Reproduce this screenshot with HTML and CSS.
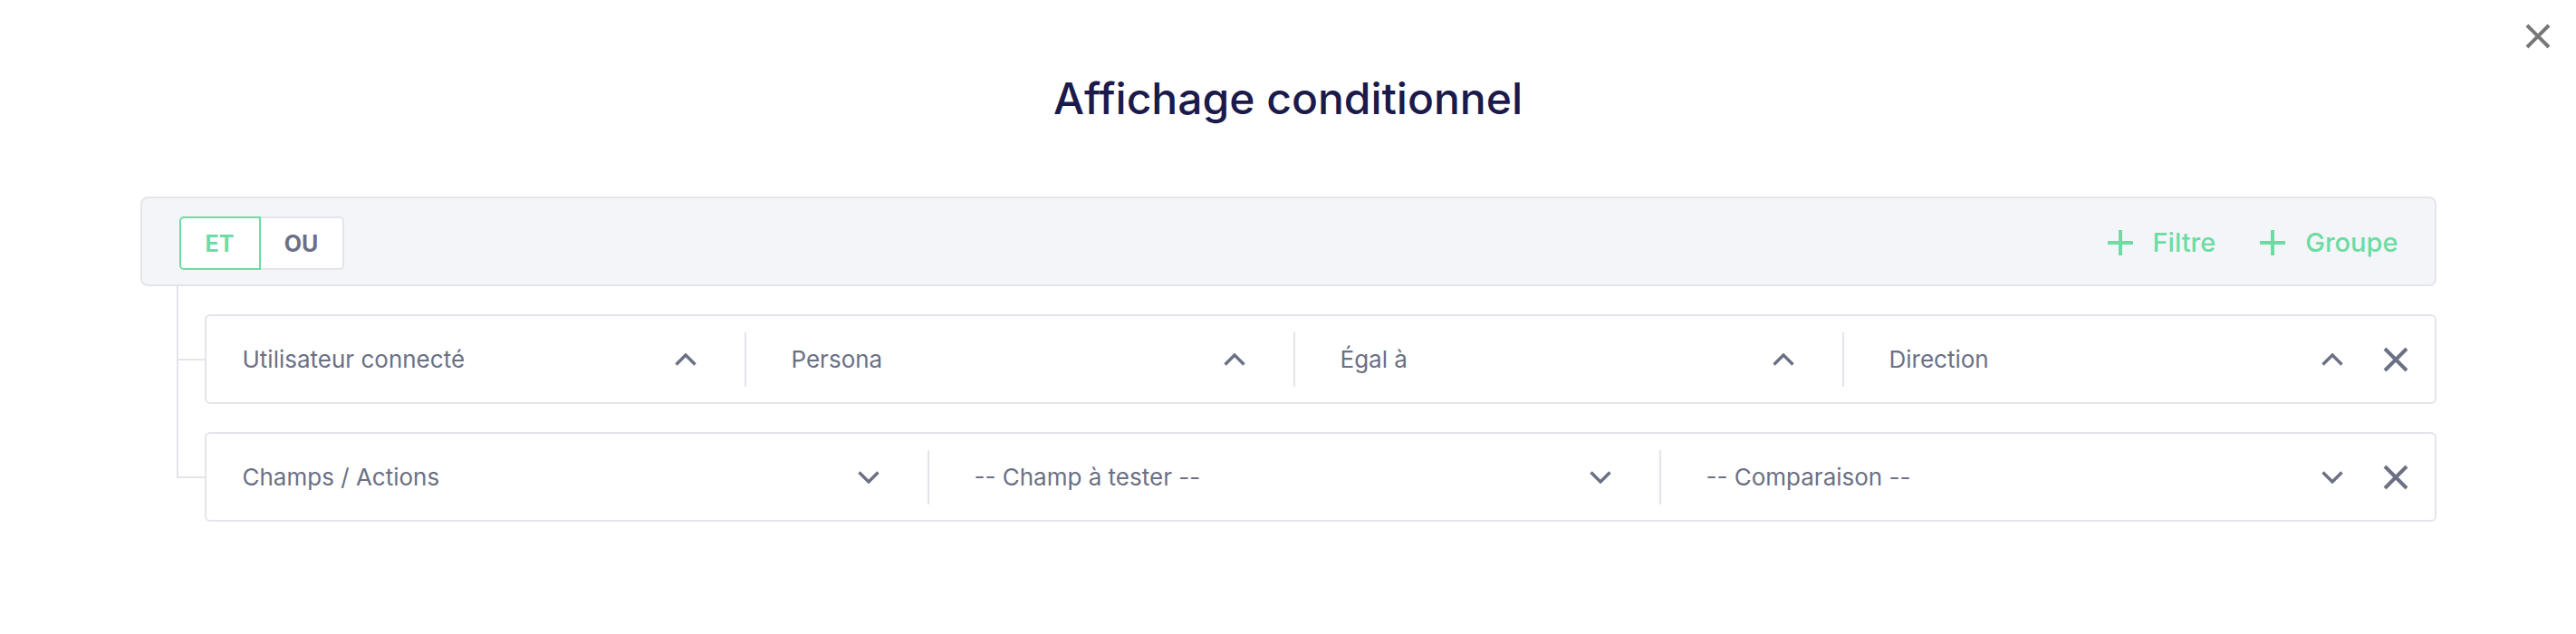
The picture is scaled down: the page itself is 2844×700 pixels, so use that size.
FILE: index.html
```html
<!DOCTYPE html>
<html lang="fr">
<head>
    <meta charset="UTF-8">
    <title>Affichage conditionnel</title>
    <link rel="stylesheet" href="styles.css">
</head>
<body>

<div class="modal">
    <button class="close-btn" aria-label="Fermer">
        <svg viewBox="0 0 28 28" width="28" height="28"><path d="M2 2 L26 26 M26 2 L2 26"/></svg>
    </button>

    <h1>Affichage conditionnel</h1>

    <div class="conditions">
        <div class="group-head">
            <div class="toggle">
                <button class="toggle-btn active">ET</button>
                <button class="toggle-btn">OU</button>
            </div>
            <div class="add-actions">
                <button class="add-btn">
                    <svg viewBox="0 0 28 28" width="28" height="28"><path d="M14 0 V28 M0 14 H28"/></svg>
                    Filtre
                </button>
                <button class="add-btn">
                    <svg viewBox="0 0 28 28" width="28" height="28"><path d="M14 0 V28 M0 14 H28"/></svg>
                    Groupe
                </button>
            </div>
        </div>

        <div class="rule">
            <div class="rule-card">
                <div class="field">
                    <span>Utilisateur connecté</span>
                    <svg class="chevron" viewBox="0 0 24 14" width="24" height="14"><path d="M1.5 12.5 L12 2 L22.5 12.5"/></svg>
                </div>
                <div class="field">
                    <span>Persona</span>
                    <svg class="chevron" viewBox="0 0 24 14" width="24" height="14"><path d="M1.5 12.5 L12 2 L22.5 12.5"/></svg>
                </div>
                <div class="field">
                    <span>Égal à</span>
                    <svg class="chevron" viewBox="0 0 24 14" width="24" height="14"><path d="M1.5 12.5 L12 2 L22.5 12.5"/></svg>
                </div>
                <div class="field">
                    <span>Direction</span>
                    <svg class="chevron" viewBox="0 0 24 14" width="24" height="14"><path d="M1.5 12.5 L12 2 L22.5 12.5"/></svg>
                </div>
                <button class="remove-btn" aria-label="Supprimer">
                    <svg viewBox="0 0 28 28" width="28" height="28"><path d="M2 2 L26 26 M26 2 L2 26"/></svg>
                </button>
            </div>
        </div>

        <div class="rule">
            <div class="rule-card">
                <div class="field">
                    <span>Champs / Actions</span>
                    <svg class="chevron" viewBox="0 0 24 14" width="24" height="14"><path d="M1.5 1.5 L12 12 L22.5 1.5"/></svg>
                </div>
                <div class="field">
                    <span>-- Champ à tester --</span>
                    <svg class="chevron" viewBox="0 0 24 14" width="24" height="14"><path d="M1.5 1.5 L12 12 L22.5 1.5"/></svg>
                </div>
                <div class="field">
                    <span>-- Comparaison --</span>
                    <svg class="chevron" viewBox="0 0 24 14" width="24" height="14"><path d="M1.5 1.5 L12 12 L22.5 1.5"/></svg>
                </div>
                <button class="remove-btn" aria-label="Supprimer">
                    <svg viewBox="0 0 28 28" width="28" height="28"><path d="M2 2 L26 26 M26 2 L2 26"/></svg>
                </button>
            </div>
        </div>
    </div>
</div>

</body>
</html>
```

FILE: styles.css
```css
body {
    margin: 0;
    font-family: Inter, "Noto Sans", sans-serif;
    background-color: #fff;
    color: #6b7085;
}

button {
    font-family: inherit;
    background: none;
    border: none;
    padding: 0;
    cursor: pointer;
}

.modal {
    position: relative;
    padding-top: 80px;
}

.close-btn {
    position: absolute;
    top: 26px;
    right: 28px;
    width: 28px;
    height: 28px;
    display: flex;
}

.close-btn svg path {
    stroke: #777;
    stroke-width: 4;
    fill: none;
}

h1 {
    margin: 0;
    text-align: center;
    font-size: 48px;
    line-height: 58px;
    font-weight: 500;
    color: #1c1a4b;
}

.conditions {
    width: 2535px;
    margin: 79px auto 0;
}

.group-head {
    display: flex;
    justify-content: space-between;
    align-items: center;
    height: 95px;
    padding: 0 40px 0 41px;
    background-color: #f4f5f9;
    border: 2px solid #e4e5ea;
    border-radius: 8px;
}

.toggle {
    display: flex;
    margin-top: 4px;
}

.toggle-btn {
    height: 59px;
    font-size: 25px;
    font-weight: 700;
    color: #6b7085;
    background-color: #fff;
    border: 2px solid #e4e5ea;
}

.toggle-btn:first-child {
    width: 90px;
    border-radius: 5px 0 0 5px;
}

.toggle-btn:last-child {
    width: 92px;
    border-left: none;
    border-radius: 0 5px 5px 0;
}

.toggle-btn.active {
    color: #6cdca2;
    border-color: #6cdca2;
}

.add-actions {
    display: flex;
    gap: 49px;
    margin-top: 2px;
}

.add-btn {
    display: flex;
    align-items: center;
    gap: 22px;
    font-size: 29px;
    font-weight: 500;
    color: #6cdca2;
}

.add-btn svg path {
    stroke: #6cdca2;
    stroke-width: 4;
    fill: none;
}

.rule {
    position: relative;
    padding: 31px 0 0 71px;
}

.rule::before {
    content: '';
    position: absolute;
    left: 40px;
    top: 0;
    bottom: 0;
    border-left: 2px solid #e4e5ea;
}

.rule:last-child::before {
    bottom: 49px;
}

.rule::after {
    content: '';
    position: absolute;
    left: 40px;
    top: 80px;
    width: 31px;
    border-top: 2px solid #e4e5ea;
}

.rule-card {
    display: flex;
    align-items: center;
    height: 95px;
    padding-right: 29px;
    background-color: #fff;
    border: 2px solid #e4e5ea;
    border-radius: 6px;
}

.field {
    flex: 1 1 0;
    min-width: 0;
    display: flex;
    align-items: center;
    justify-content: space-between;
    height: 60px;
    padding: 0 53px 0 50px;
    border-left: 2px solid #e4e5ea;
    font-size: 26px;
    color: #6b7085;
}

.field:first-child {
    padding-left: 40px;
    border-left: none;
}

.chevron path {
    stroke: #6b7085;
    stroke-width: 3.4;
    fill: none;
}

.remove-btn {
    display: flex;
    margin-left: -9px;
    width: 28px;
    height: 28px;
}

.remove-btn svg path {
    stroke: #6b7085;
    stroke-width: 4;
    fill: none;
}
```
